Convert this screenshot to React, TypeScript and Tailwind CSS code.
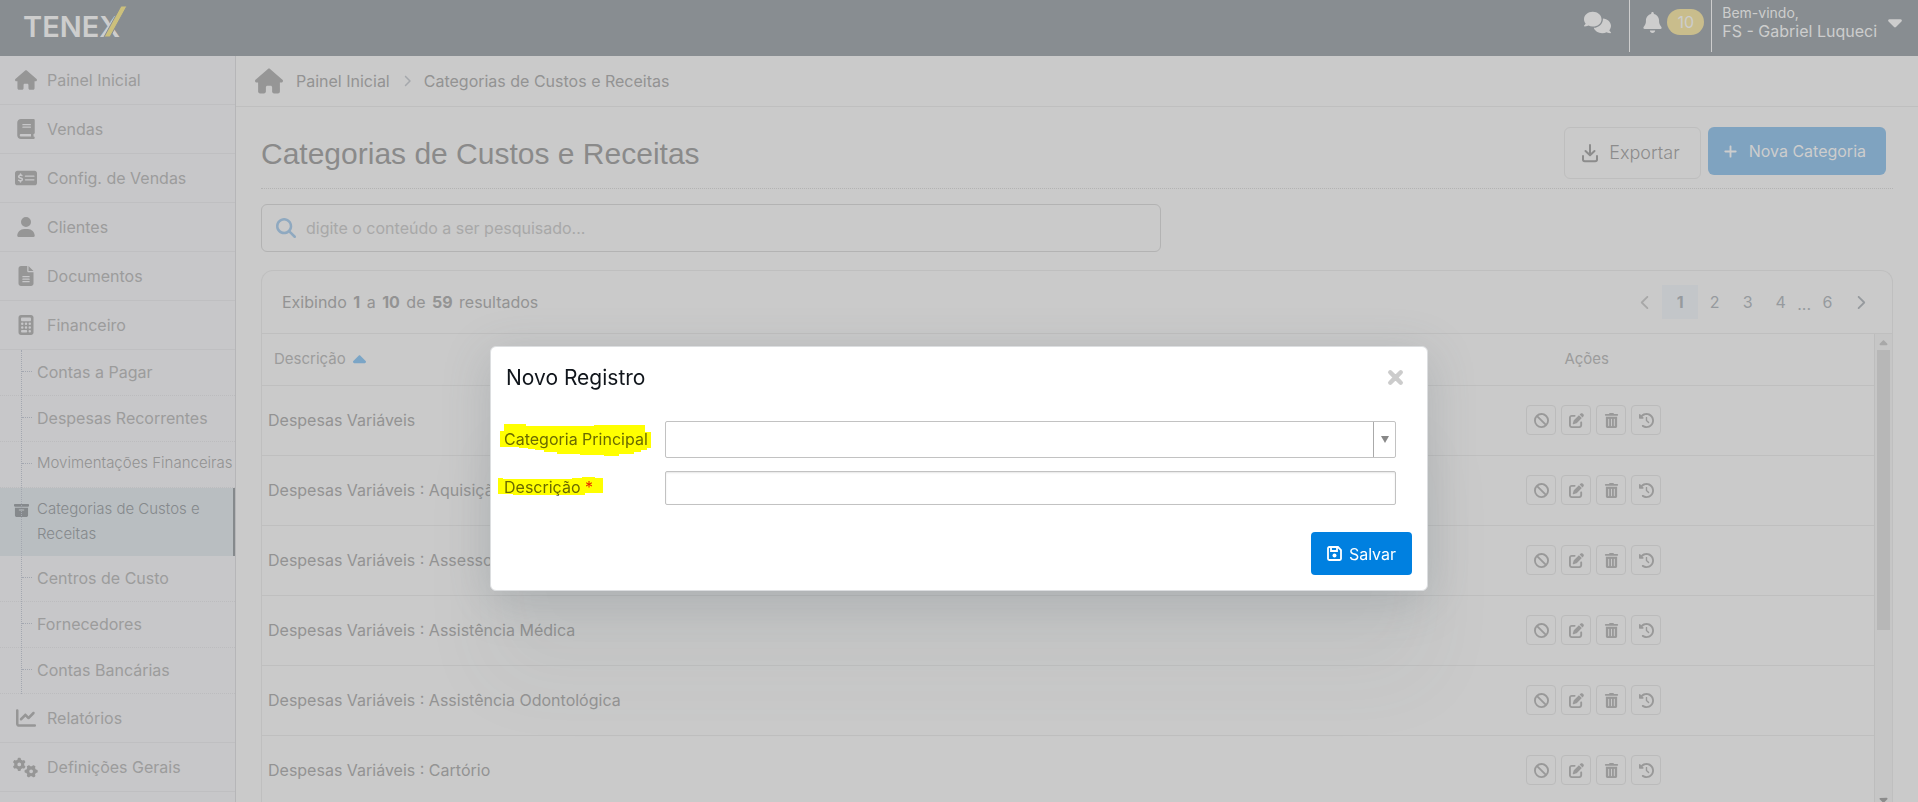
import type { ReactNode } from "react";
import {
  FaHouse, FaBook, FaMoneyCheckDollar, FaUser, FaFileLines, FaCalculator,
  FaBoxArchive, FaChartLine, FaGears, FaComments, FaBell, FaCaretDown,
  FaCaretUp, FaBan, FaPenToSquare, FaClockRotateLeft, FaMagnifyingGlass,
  FaPlus, FaXmark, FaChevronLeft, FaChevronRight,
} from "react-icons/fa6";
import { FaTrashAlt } from "react-icons/fa";
import type { IconType } from "react-icons";

const mainItems: { label: string; icon: IconType; size: number }[] = [
  { label: "Painel Inicial", icon: FaHouse, size: 22 },
  { label: "Vendas", icon: FaBook, size: 20 },
  { label: "Config. de Vendas", icon: FaMoneyCheckDollar, size: 22 },
  { label: "Clientes", icon: FaUser, size: 20 },
  { label: "Documentos", icon: FaFileLines, size: 20 },
  { label: "Financeiro", icon: FaCalculator, size: 20 },
];

const subItems: { label: string; small?: boolean; active?: boolean }[] = [
  { label: "Contas a Pagar" },
  { label: "Despesas Recorrentes" },
  { label: "Movimentações Financeiras", small: true },
  { label: "Categorias de Custos e Receitas", active: true },
  { label: "Centros de Custo" },
  { label: "Fornecedores" },
  { label: "Contas Bancárias" },
];

const footerItems: { label: string; icon: IconType; size: number }[] = [
  { label: "Relatórios", icon: FaChartLine, size: 20 },
  { label: "Definições Gerais", icon: FaGears, size: 25 },
];

const rows = [
  "Despesas Variáveis",
  "Despesas Variáveis : Aquisição de Equipamentos",
  "Despesas Variáveis : Assessoria Contábil",
  "Despesas Variáveis : Assistência Médica",
  "Despesas Variáveis : Assistência Odontológica",
  "Despesas Variáveis : Cartório",
];

const actions: { label: string; icon: IconType }[] = [
  { label: "Desativar", icon: FaBan },
  { label: "Editar", icon: FaPenToSquare },
  { label: "Excluir", icon: FaTrashAlt },
  { label: "Histórico", icon: FaClockRotateLeft },
];

function Logo() {
  return (
    <svg viewBox="0 0 108 34" className="h-[34px] w-[108px] overflow-visible" role="img" aria-label="Tenex">
      <text x="0" y="32" fontSize="29" fontWeight="600" fill="#cdcdcd">TENEX</text>
      <polygon points="81,32 98,1 104,1 87,32" fill="#ccc07c" stroke="#888d91" strokeWidth="1" />
    </svg>
  );
}

function DownloadIcon() {
  return (
    <svg viewBox="0 0 18 20" className="h-5 w-[18px]" fill="none" stroke="currentColor" strokeWidth="2" strokeLinecap="round" strokeLinejoin="round">
      <path d="M9 2v10M4.500 8 9 12.300 13.500 8" />
      <path d="M2 13v3.500a1.800 1.800 0 0 0 1.800 1.800h10.400a1.800 1.800 0 0 0 1.800-1.800V13" />
    </svg>
  );
}

function SaveIcon() {
  return (
    <svg viewBox="0 0 15 15" className="h-[15px] w-[15px]" fill="none" stroke="currentColor" strokeWidth="1.800">
      <path d="M1 2.200A1.200 1.200 0 0 1 2.200 1H11l3 3v8.800a1.200 1.200 0 0 1-1.200 1.200H2.200A1.200 1.200 0 0 1 1 12.800z" />
      <path d="M4 1v4h6V1" />
      <circle cx="7.500" cy="9.500" r="2" fill="currentColor" stroke="none" />
    </svg>
  );
}

function NavItem({ label, icon: Icon, size }: { label: string; icon: IconType; size: number }) {
  return (
    <li className="border-b border-[#bfbfc1]">
      <a href="#" className="flex h-12 items-center pl-3">
        <span className="flex w-[27px] justify-center text-[#969696]">
          <Icon size={size} />
        </span>
        <span className="pl-2">{label}</span>
      </a>
    </li>
  );
}

function Sidebar() {
  return (
    <nav className="w-[236px] shrink-0 border-r border-[#b6b6b8] bg-[#c7c7c9] text-base text-[#9c9c9c]">
      <ul>
        {mainItems.map((item) => <NavItem key={item.label} {...item} />)}
        <li className="relative">
          <ul>
            {subItems.map(({ label, small, active }) =>
              active ? (
                <li key={label} className="border-r-2 border-[#85898c] bg-[#b9bec1] text-[#85898c]">
                  <a href="#" className="flex h-[68px] gap-2 pt-2 pl-[14px] text-[15px] leading-[25px] font-light">
                    <FaBoxArchive size={15} className="mt-[7px] shrink-0" />
                    {label}
                  </a>
                </li>
              ) : (
                <li key={label} className="border-b border-dotted border-[#bcbcbe]">
                  <a href="#" className={`flex h-[45px] items-center whitespace-nowrap pb-0.5 pl-[22px] ${small ? "text-[15px] font-light text-[#929292]" : ""}`}>
                    <span className="mr-[5px] w-[10px] border-t border-dotted border-[#a3a7b0]" />
                    {label}
                  </a>
                </li>
              )
            )}
          </ul>
          <span className="pointer-events-none absolute inset-y-0 left-[21px] border-l border-dotted border-[#a3a7b0]" />
        </li>
        {footerItems.map((item) => <NavItem key={item.label} {...item} />)}
      </ul>
    </nav>
  );
}

function Header() {
  return (
    <header className="flex h-14 shrink-0 items-start bg-[#888d91] text-[#cdcdcd]">
      <a href="#" className="mt-[5px] ml-[23px]"><Logo /></a>
      <div className="ml-auto flex h-[52px]">
        <button type="button" aria-label="Mensagens" className="flex items-center px-[18px] pb-2">
          <FaComments size={27} />
        </button>
        <button type="button" aria-label="Notificações" className="flex items-center gap-1 border-l border-[#cdcdcd] pr-[7px] pl-3 pb-2">
          <FaBell size={21} />
          <span className="flex h-[26px] w-[37px] items-center justify-center rounded-full bg-[#c9bd8c] text-base">10</span>
        </button>
        <button type="button" className="flex border-l border-[#cdcdcd] pr-3 pl-[10px] text-left">
          <span className="flex flex-col pt-[3px]">
            <span className="text-sm leading-[19px]">Bem-vindo,</span>
            <span className="text-base leading-[19px]">FS - Gabriel Luqueci</span>
          </span>
          <FaCaretDown size={22} className="mt-[11px] ml-[7px]" />
        </button>
      </div>
    </header>
  );
}

function PageItem({ children, label }: { children: ReactNode; label?: string }) {
  return (
    <button type="button" aria-label={label} className="flex h-[34px] w-[33px] items-center justify-center">
      {children}
    </button>
  );
}

function Results() {
  return (
    <section className="mt-[18px] mr-[25px] ml-[25px] flex min-h-0 flex-1 flex-col overflow-hidden rounded-t-xl border border-b-0 border-[#bfbfbf]">
      <div className="flex h-[63px] shrink-0 items-center justify-between border-b border-[#bfbfbf] pr-[15px] pl-5 text-[#939393]">
        <p>
          Exibindo <b className="px-0.5 font-bold">1</b> a <b className="px-0.5 font-bold">10</b> de{" "}
          <b className="px-0.5 font-bold">59</b> resultados
        </p>
        <div className="flex items-center text-[#969a9e]">
          <PageItem label="Anterior"><FaChevronLeft size={15} className="text-[#a8a8a8]" /></PageItem>
          <button type="button" className="h-[34px] w-9 bg-[#c3c6c9] font-bold">1</button>
          <PageItem>2</PageItem>
          <PageItem>3</PageItem>
          <PageItem>4</PageItem>
          <span className="pt-1">...</span>
          <PageItem>6</PageItem>
          <PageItem label="Próxima"><FaChevronRight size={15} /></PageItem>
        </div>
      </div>
      <div className="flex min-h-0 flex-1">
        <div className="min-w-0 flex-1 overflow-hidden">
          <table className="w-full table-fixed text-left">
            <thead>
              <tr className="h-[51px] border-b border-[#bfbfbf] text-[15px] text-[#9c9c9c]">
                <th className="pl-3 font-normal">
                  <button type="button" className="flex items-center gap-[3px]">
                    Descrição <FaCaretUp size={21} className="mt-0.5 text-[#7ba5c6]" />
                  </button>
                </th>
                <th className="w-[22%] pl-[45px] font-normal">Ações</th>
              </tr>
            </thead>
            <tbody>
              {rows.map((row) => (
                <tr key={row} className="h-[70px] border-b border-[#bfbfbf]">
                  <td className="pl-1.5 text-[#939393]">{row}</td>
                  <td className="pl-[7px]">
                    <div className="flex gap-[5px] text-[#999]">
                      {actions.map(({ label, icon: Icon }) => (
                        <button
                          key={label}
                          type="button"
                          aria-label={label}
                          className="flex size-[30px] items-center justify-center rounded-sm border border-[#bbb]"
                        >
                          <Icon size={15} />
                        </button>
                      ))}
                    </div>
                  </td>
                </tr>
              ))}
            </tbody>
          </table>
        </div>
        {/* Scrollbar */}
        <div className="flex w-[18px] shrink-0 flex-col items-center border-l border-[#bdbdbd] bg-[#c6c6c6]">
          <span className="h-4 text-[#a8a8a8]"><FaCaretUp size={13} className="mt-[3px]" /></span>
          <span className="h-[280px] w-[13px] bg-[#b7b7b7]" />
          <FaCaretDown size={13} className="mt-auto -mb-1 shrink-0 text-[#8c8c8c]" />
        </div>
      </div>
    </section>
  );
}

function NewRecordDialog() {
  return (
    <div className="fixed inset-0 flex items-start justify-center pt-[346px]">
      <form
        role="dialog"
        aria-labelledby="dialog-title"
        className="w-[938px] rounded-md border border-[#dcdee0] bg-white shadow-[0_10px_48px_rgba(80,95,105,0.22),0_90px_80px_rgba(80,95,105,0.05)]"
      >
        <div className="flex items-center justify-between pt-[15px] pr-[21px] pl-[15px]">
          <h2 id="dialog-title" className="text-[21px] leading-8 text-[#10151b]">Novo Registro</h2>
          <button type="button" aria-label="Fechar" className="pb-0.5 text-[#ccc]">
            <FaXmark size={21} stroke="currentColor" strokeWidth={44} />
          </button>
        </div>
        <div className="flex flex-col gap-[13px] pt-[27px] pr-[31px] pl-[13px] text-[#6a6a6a]">
          <div className="flex items-center">
            <label htmlFor="categoria" className="relative w-[161px] shrink-0 pb-0.5 whitespace-nowrap">
              Categoria Principal
              <svg viewBox="0 0 151 32" className="absolute -top-[3px] -left-1 h-8 w-[151px] mix-blend-multiply" aria-hidden="true">
                <path d="M4 0H26V2H94V1H145V8H151V24H147V26H141V28H134V30H119V32H104V31H80V30H57V28H44V26H35V25H28V24H19V23H0V7H4z" fill="#ff0" />
              </svg>
            </label>
            <div className="relative flex-1">
              <select id="categoria" className="block h-[37px] w-full appearance-none rounded-xs border border-[#c2c2c2] bg-white px-2" />
              <span className="pointer-events-none absolute inset-y-px right-px flex w-[22px] items-center justify-center border-l border-[#aaa]">
                <svg viewBox="0 0 8 7" className="h-[7px] w-2"><path d="M0 0h8L4 7z" fill="#888" /></svg>
              </span>
            </div>
          </div>
          <div className="flex items-center">
            <label htmlFor="descricao" className="relative w-[161px] shrink-0 pb-0.5">
              Descrição <span className="text-[#e8281e]">*</span>
              <svg viewBox="0 0 105 19" className="absolute top-0.5 -left-1.5 h-[19px] w-[105px] mix-blend-multiply" aria-hidden="true">
                <path d="M0 1H5V2H74V1H84V0H97V1H105V16H87V18H15V17H0z" fill="#ff0" />
              </svg>
            </label>
            <input id="descricao" type="text" className="h-[34px] min-w-0 flex-1 rounded-xs border border-[#c2c2c2] px-2 shadow-[inset_0_1px_2px_rgba(0,0,0,0.1)]" />
          </div>
        </div>
        <div className="flex justify-end pt-[27px] pr-[15px] pb-[15px]">
          <button type="submit" className="flex h-[43px] items-center gap-[7px] rounded-sm bg-[#0080e0] px-4 text-white">
            <SaveIcon /> Salvar
          </button>
        </div>
      </form>
    </div>
  );
}

export default function App() {
  return (
    <div className="flex h-screen flex-col overflow-hidden bg-[#cacaca] font-['Inter','Liberation_Sans',sans-serif] text-base">
      <Header />
      <div className="flex min-h-0 flex-1">
        <Sidebar />
        <main className="flex min-w-0 flex-1 flex-col">
          <nav className="flex h-[51px] shrink-0 items-center border-b border-[#bfbfbf] pl-[19px] text-[#939393]">
            <a href="#" aria-label="Início" className="text-[#969696]"><FaHouse size={28} /></a>
            <a href="#" className="pl-[13px]">Painel Inicial</a>
            <FaChevronRight size={12} className="mx-[11px] text-[#a5a8ac]" />
            <span>Categorias de Custos e Receitas</span>
          </nav>
          <div className="mr-[25px] ml-[25px] flex h-[82px] shrink-0 items-end justify-between border-b border-dotted border-[#b3b3b3] pr-[7px]">
            <h1 className="pb-3 font-['Liberation_Sans',sans-serif] text-[30px] text-[#8a8a8a]">
              Categorias de Custos e Receitas
            </h1>
            <div className="flex items-start gap-[7px] pb-[9px]">
              <button type="button" className="flex h-[52px] items-center gap-[10px] rounded-md border border-[#bebebe] pr-5 pl-4 text-lg font-light text-[#8c8c8c]">
                <DownloadIcon /> Exportar
              </button>
              <button type="button" className="flex h-12 items-center gap-[11px] rounded-md bg-[#7fa3c0] px-[15px] pr-5 text-[#cdcdcd]">
                <FaPlus size={15} /> Nova Categoria
              </button>
            </div>
          </div>
          <label className="mx-[25px] mt-[15px] flex h-12 w-[53.500%] shrink-0 items-center gap-[10px] rounded-md border border-[#b3b3b3] px-[14px]">
            <FaMagnifyingGlass size={20} className="text-[#8fa9c0]" />
            <input
              type="text"
              aria-label="Pesquisar"
              placeholder="digite o conteúdo a ser pesquisado..."
              className="min-w-0 flex-1 bg-transparent outline-none placeholder:text-[#a8a8a8]"
            />
          </label>
          <Results />
        </main>
      </div>
      <NewRecordDialog />
    </div>
  );
}
